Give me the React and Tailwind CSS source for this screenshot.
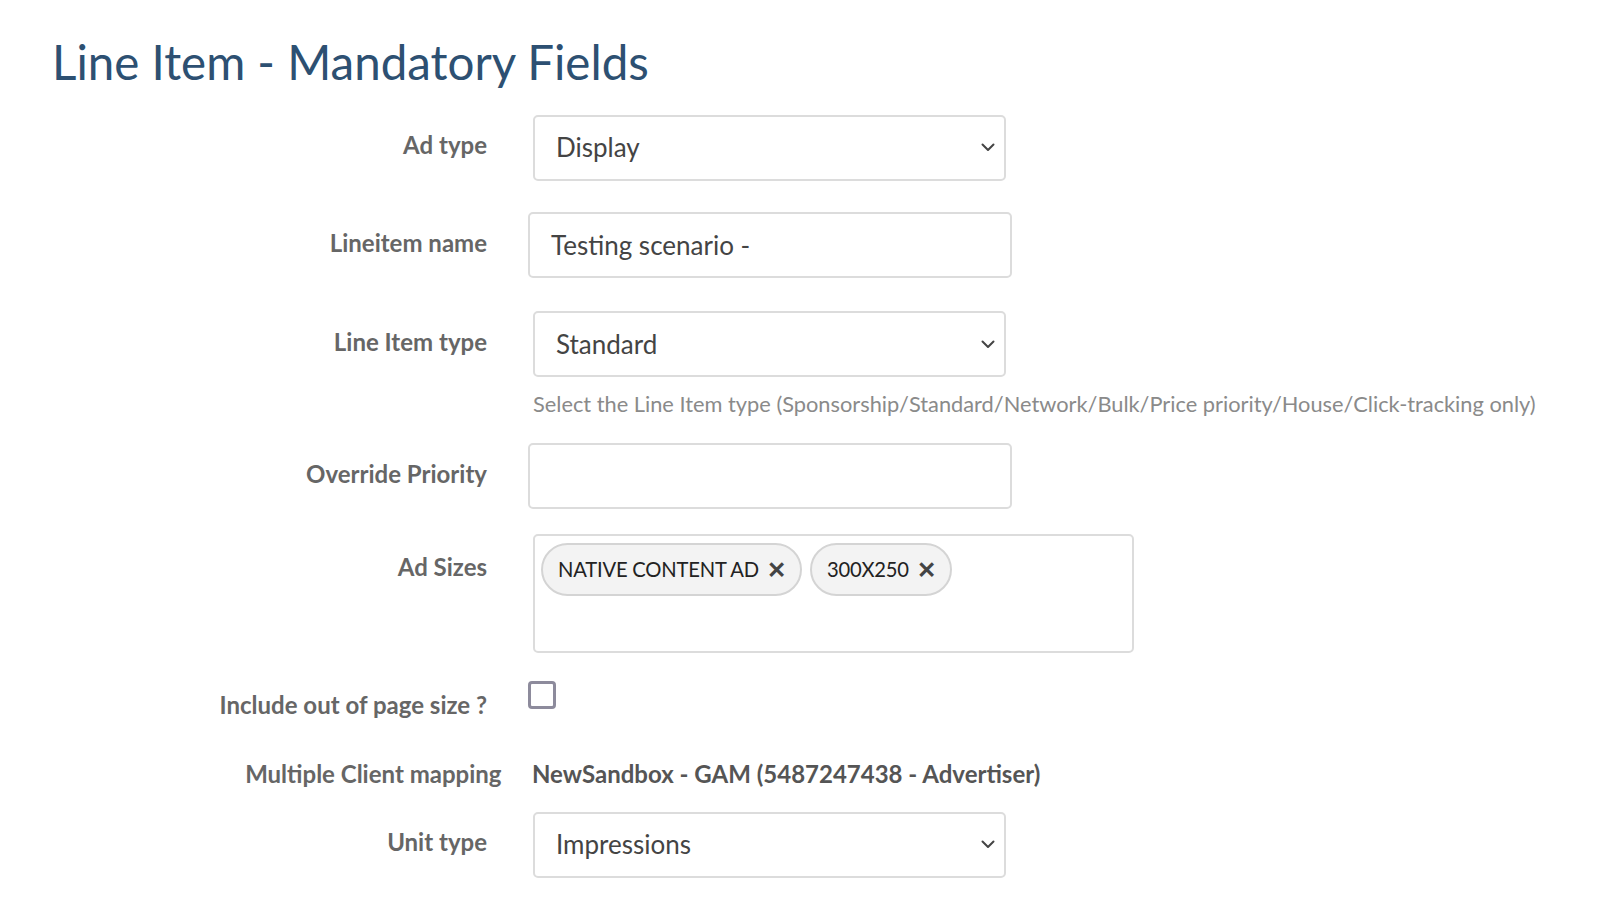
import React from 'react'

const Chevron = () => (
	<svg width="14" height="9" viewBox="0 0 14 9" fill="none" className="shrink-0">
		<path d="M1.5 1.5 L7 7 L12.5 1.5" stroke="#444" strokeWidth="2" strokeLinecap="round" strokeLinejoin="round" />
	</svg>
)

const SelectBox = ({ value }) => (
	<div className="ml-[46px] w-[473px] h-[66.5px] rounded-[5px] border-2 border-[#dcdcdc] bg-white flex items-center justify-between pl-[21px] pr-[9px]">
		<span className="text-[26px] text-[#444]">{value}</span>
		<Chevron />
	</div>
)

const InputBox = ({ value = '' }) => (
	<div className="ml-[41px] w-[484px] h-[66.5px] rounded-[5px] border-2 border-[#dcdcdc] bg-white flex items-center pl-[21px]">
		<span className="text-[26px] text-[#444]">{value}</span>
	</div>
)

const Label = ({ children, className = '' }) => (
	<div className={`w-[435px] shrink-0 text-right font-bold text-[24px] leading-[36px] text-[#666] ${className}`}>
		{children}
	</div>
)

const Chip = ({ text }) => (
	<div className="h-[53px] rounded-full border-2 border-[#d4d4d4] bg-[#f3f3f3] flex items-center pl-[15px] pr-[14px] gap-[8px]">
		<span className="text-[20.2px] text-[#222] tracking-[-0.2px]">{text}</span>
		<span className="text-[23px] font-bold text-[#444] leading-none">✕</span>
	</div>
)

export default function App() {
	return (
		<div className="min-h-[906px] bg-white pl-[52px] font-['Lato','Liberation_Sans',sans-serif]">
			<h1 className="pt-[34px] text-[47.5px] leading-[56px] text-[#2d5072]">Line Item - Mandatory Fields</h1>

			<div className="flex flex-col">
				<div className="mt-[24.6px] flex items-center">
					<Label className="-mt-[5px]">Ad type</Label>
					<SelectBox value="Display" />
				</div>

				<div className="mt-[30.8px] flex items-center">
					<Label className="-mt-[5px]">Lineitem name</Label>
					<InputBox value="Testing scenario -" />
				</div>

				<div className="mt-[32.5px] flex items-center">
					<Label className="-mt-[5px]">Line Item type</Label>
					<SelectBox value="Standard" />
				</div>
				<div className="ml-[481px] mt-[11.7px] text-[21.8px] text-[#8a8a8a] leading-[30px]">
					Select the Line Item type (Sponsorship/Standard/Network/Bulk/Price priority/House/Click-tracking only)
				</div>

				<div className="mt-[23.9px] flex items-center">
					<Label className="-mt-[5px]">Override Priority</Label>
					<InputBox />
				</div>

				<div className="mt-[24.5px] flex items-start">
					<Label className="pt-[15px]">Ad Sizes</Label>
					<div className="ml-[46px] w-[601px] h-[119px] rounded-[5px] border-2 border-[#dcdcdc] bg-white flex items-start gap-[8px] pl-[6px] pt-[7px]">
						<Chip text="NATIVE CONTENT AD" />
						<Chip text="300X250" />
					</div>
				</div>

				<div className="mt-[27.7px] flex items-start">
					<Label className="pt-[6.6px]">Include out of page size ?</Label>
					<div className="ml-[41px] w-[28px] h-[28px] rounded-[4px] border-[3px] border-[#8d8b9c] bg-white" />
				</div>

				<div className="mt-[32.5px] flex items-center">
					<Label className="w-[449.5px]">Multiple Client mapping</Label>
					<div className="ml-[30.5px] font-bold text-[24px] leading-[36px] text-[#555]">NewSandbox - GAM (5487247438 - Advertiser)</div>
				</div>

				<div className="mt-[19.9px] flex items-center">
					<Label className="-mt-[5px]">Unit type</Label>
					<SelectBox value="Impressions" />
				</div>
			</div>
		</div>
	)
}
